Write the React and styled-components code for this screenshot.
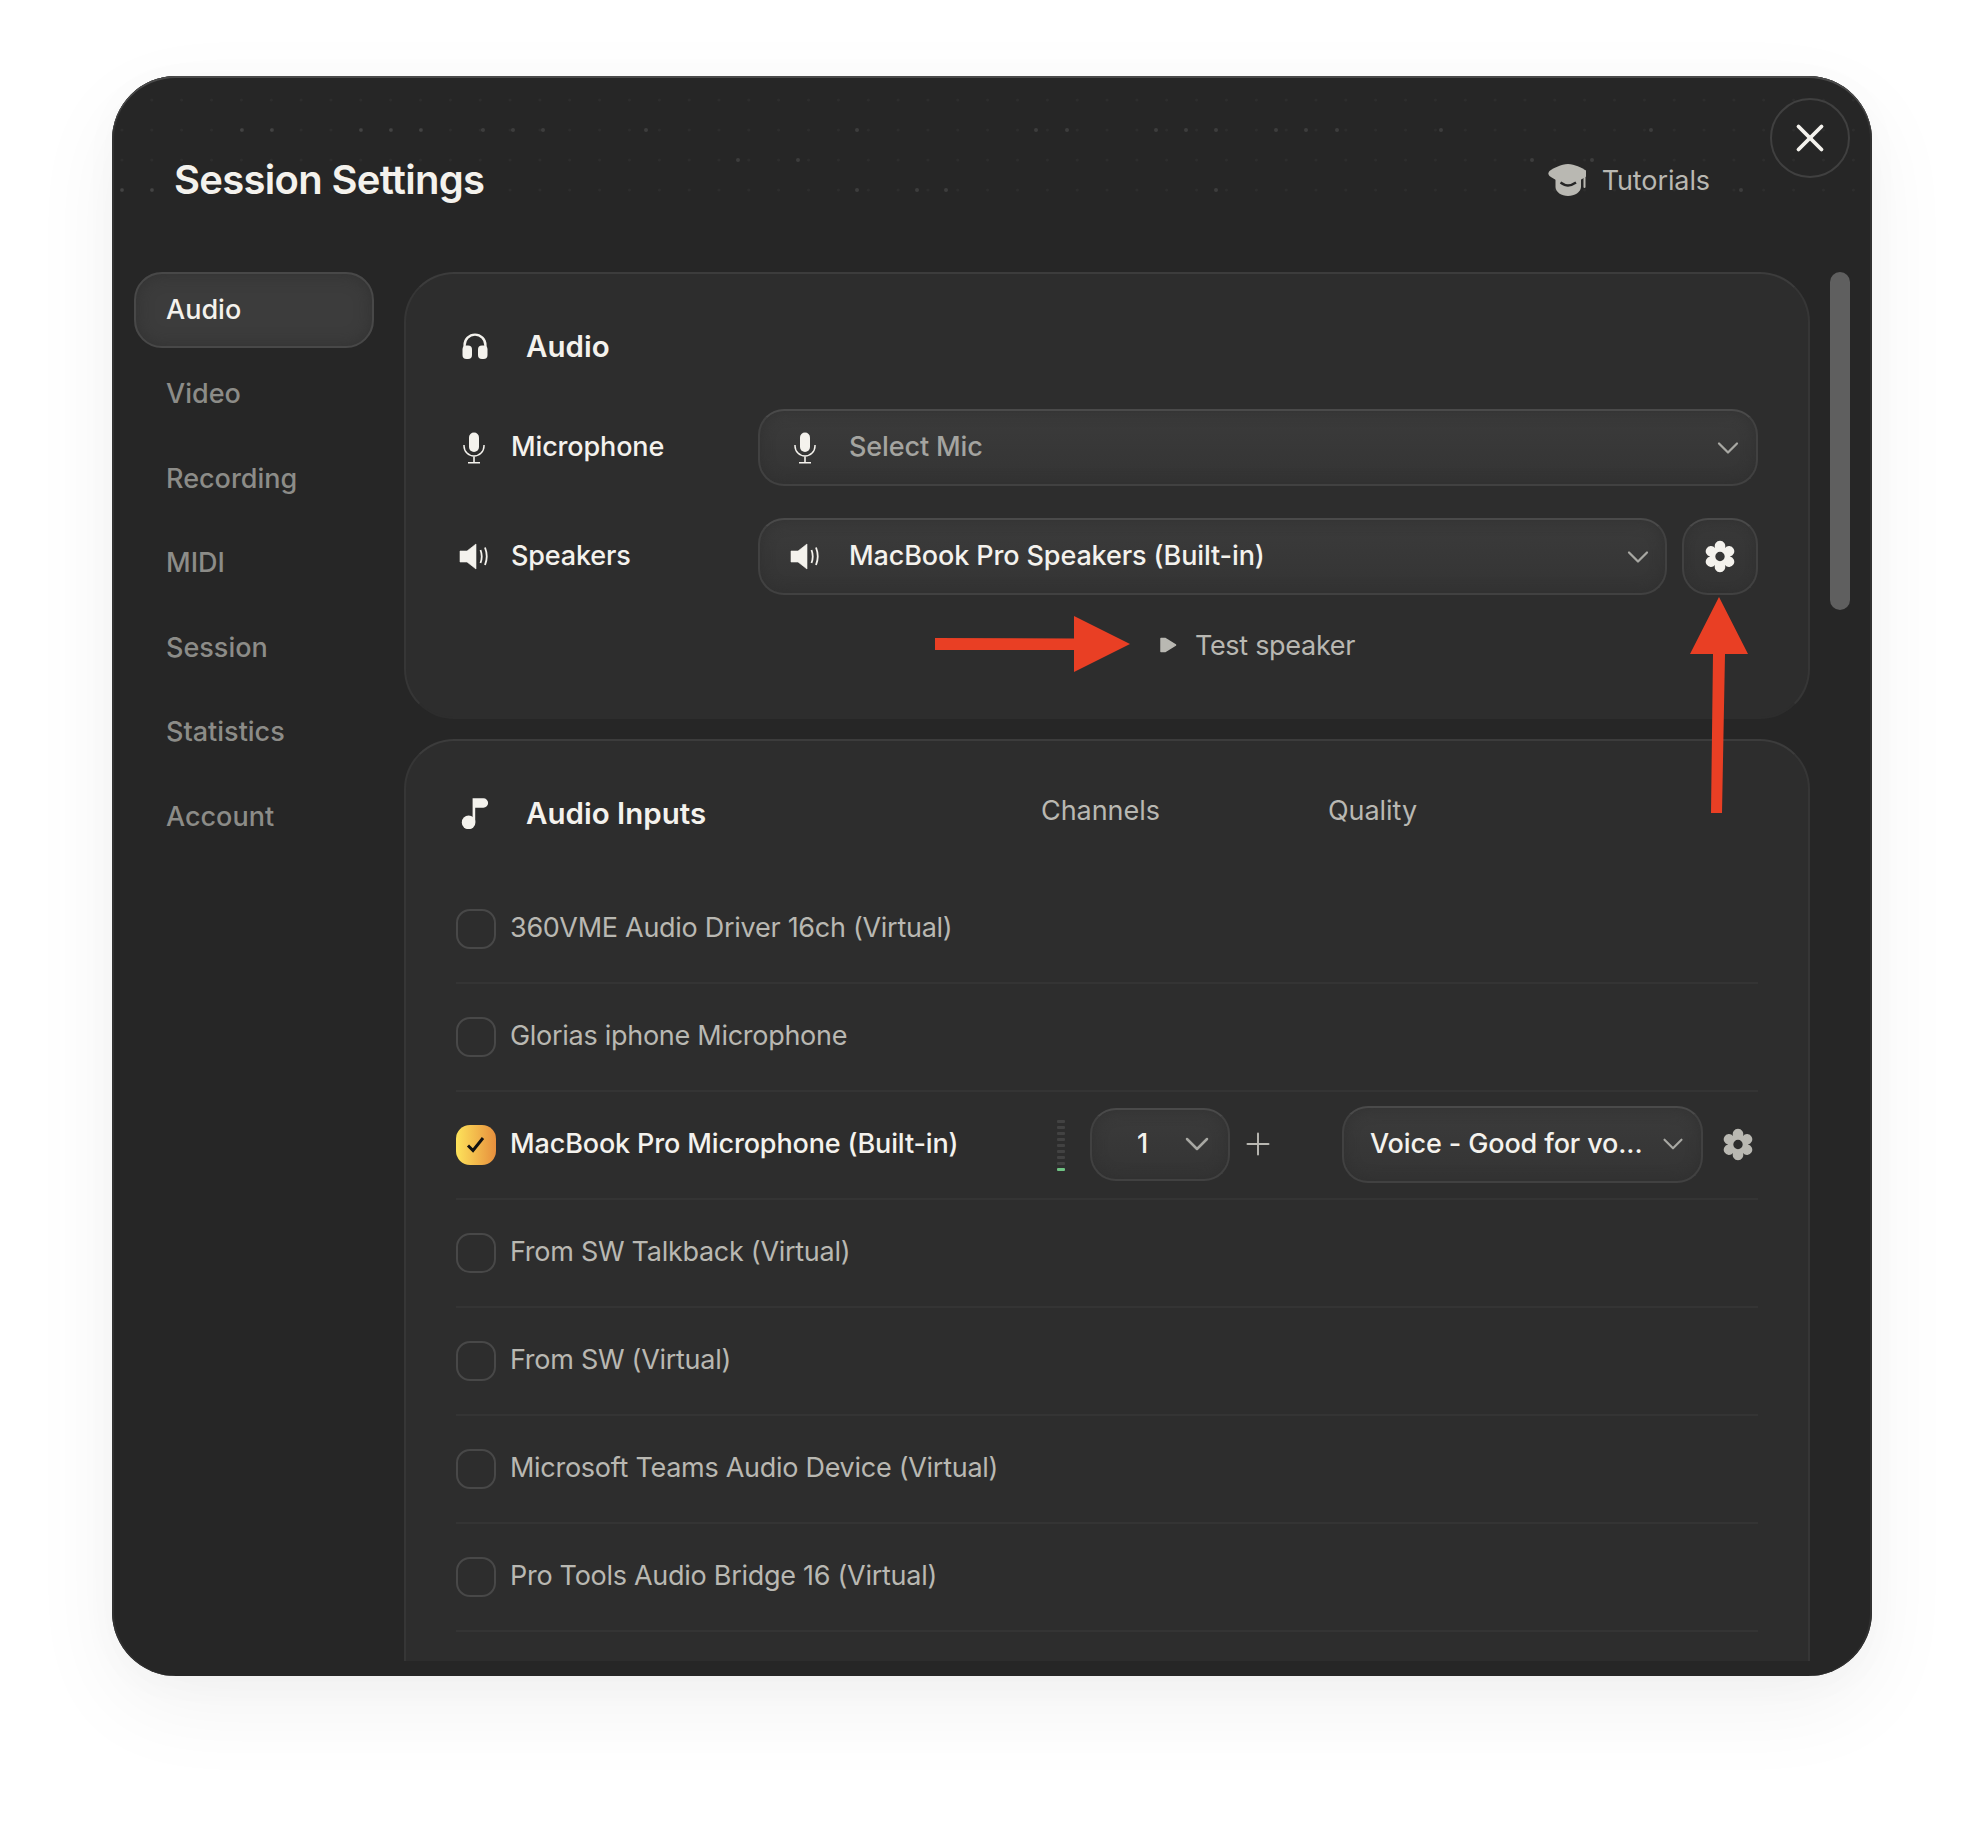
import React from 'react';
import styled, { createGlobalStyle } from 'styled-components';
import { ChevronDown, Plus, X } from 'lucide-react';

const GlobalStyle = createGlobalStyle`
  html, body { margin: 0; padding: 0; background: #fff; }
  body { font-family: Inter, "Noto Sans", "Liberation Sans", sans-serif; -webkit-font-smoothing: antialiased; }
`;

const Page = styled.div`
  width: 1984px;
  height: 1824px;
  padding: 76px 112px 0;
  box-sizing: border-box;
  position: relative;
  overflow: hidden;
  background: #fff;
`;

const Modal = styled.div`
  position: relative;
  width: 1760px;
  height: 1600px;
  box-sizing: border-box;
  border-radius: 64px;
  background: #262626;
  box-shadow: inset 0 2px 0 #4a4a4a, inset 2px 0 0 #313131, inset -2px 0 0 #313131, 0 30px 90px rgba(0, 0, 0, 0.055), 0 6px 40px rgba(0, 0, 0, 0.025);
  padding-bottom: 15px;
  display: flex;
  flex-direction: column;
`;

const DotField = styled.svg`
  position: absolute;
  left: 0;
  top: 0;
  pointer-events: none;
`;

const Header = styled.header`
  position: relative;
  height: 196px;
  box-sizing: border-box;
  padding: 63px 162px 53px 62px;
  display: flex;
  align-items: center;
  justify-content: space-between;
  flex: none;
`;

const Title = styled.h1`
  margin: 0;
  font-size: 40px;
  font-weight: 600;
  letter-spacing: -0.7px;
  color: #f4f2ed;
`;

const Tutorials = styled.a`
  display: flex;
  align-items: center;
  gap: 16px;
  font-size: 27px;
  font-weight: 400;
  letter-spacing: -0.1px;
  color: #b9b8b2;
  margin-top: 2px;
`;

const CloseButton = styled.button`
  position: absolute;
  right: 22px;
  top: 22px;
  width: 80px;
  height: 80px;
  padding: 0;
  border-radius: 50%;
  border: 2px solid #404040;
  background: transparent;
  color: #f4f2ed;
  display: flex;
  align-items: center;
  justify-content: center;
`;

const Body = styled.div`
  flex: 1;
  min-height: 0;
  display: flex;
  padding-left: 22px;
  gap: 30px;
`;

const Sidebar = styled.nav`
  width: 240px;
  flex: none;
  display: flex;
  flex-direction: column;
  gap: 8.5px;
`;

const NavItem = styled.div`
  height: 76px;
  box-sizing: border-box;
  padding-left: 32px;
  padding-bottom: 2px;
  display: flex;
  align-items: center;
  border-radius: 28px;
  font-size: 27px;
  font-weight: 500;
  color: ${p => (p.$active ? '#f4f2ed' : '#8c8c88')};
  ${p => p.$active && `
    background: #3c3c3c;
    border: 2px solid #484848;
    padding-left: 30px;
    box-shadow: inset 0 0 16px rgba(46, 46, 46, 0.7);
  `}
`;

const Content = styled.main`
  width: 1406px;
  flex: none;
  overflow: hidden;
  display: flex;
  flex-direction: column;
  gap: 20px;
`;

const Card = styled.section`
  flex: none;
  box-sizing: border-box;
  background: #2d2d2d;
  border: 2px solid #363636;
  border-top-color: #3c3c3c;
  border-bottom-color: #2d2d2d;
  border-radius: 50px;
  padding: 38px 50px ${p => (p.$clipped ? 120 : 52)}px;
`;

const CardHeader = styled.div`
  height: 68px;
  display: flex;
  align-items: center;
`;

const HeaderIcon = styled.span`
  width: 70px;
  padding-left: 5px;
  box-sizing: border-box;
  flex: none;
  display: flex;
  align-items: center;
`;

const CardTitle = styled.h2`
  margin: 0;
  font-size: 29.5px;
  font-weight: 600;
  color: #f4f2ed;
  width: ${p => p.$width || 'auto'};
  flex: none;
`;

const ColumnLabel = styled.span`
  width: ${p => p.$width};
  flex: none;
  font-size: 27px;
  font-weight: 400;
  letter-spacing: -0.05px;
  color: #b9b8b2;
  padding-bottom: 6px;
`;

const Fields = styled.div`
  margin-top: 29px;
  display: flex;
  flex-direction: column;
  gap: 32px;
`;

const FieldRow = styled.div`
  display: flex;
  align-items: center;
`;

const FieldLabel = styled.div`
  width: 302px;
  flex: none;
  display: flex;
  align-items: center;
  padding-bottom: 2px;
  font-size: 27px;
  font-weight: 500;
  letter-spacing: -0.15px;
  color: #f4f2ed;
`;

const LabelIcon = styled.span`
  width: 55px;
  flex: none;
  display: flex;
  align-items: center;
  padding-left: ${p => p.$pad || 0}px;
  padding-top: 2px;
  box-sizing: border-box;
`;

const Select = styled.div`
  height: ${p => p.$height || 77}px;
  width: ${p => p.$width || 'auto'};
  flex: ${p => (p.$width ? 'none' : 1)};
  box-sizing: border-box;
  display: flex;
  align-items: center;
  border-radius: 26px;
  background: linear-gradient(180deg, #3b3b3b, #343434);
  border: 2px solid #414141;
  border-top-color: #4a4a4a;
  box-shadow: inset 0 0 14px rgba(46, 46, 46, 0.75);
  color: #f4f2ed;
  font-size: 27px;
  font-weight: 500;
  letter-spacing: -0.12px;
`;

const ChannelSelect = styled(Select)`
  margin-left: 25px;
`;

const QualitySelect = styled(Select)`
  margin-left: 66px;
`;

const SelectIcon = styled.span`
  width: ${p => p.$width}px;
  flex: none;
  box-sizing: border-box;
  padding-left: ${p => p.$pad}px;
  display: flex;
  align-items: center;
`;

const SelectText = styled.span`
  flex: 1;
  min-width: 0;
  white-space: nowrap;
  padding-left: ${p => p.$pad || 0}px;
  padding-bottom: 2px;
  color: ${p => (p.$muted ? '#a4a4a0' : '#f4f2ed')};
`;

const Chevron = styled(ChevronDown)`
  flex: none;
  color: #a8a8a3;
  margin-right: ${p => p.$right}px;
`;

const GearButton = styled.button`
  width: 76px;
  height: 77px;
  flex: none;
  margin-left: 15px;
  padding: 0;
  border-radius: 26px;
  background: linear-gradient(180deg, #383838, #333);
  border: 2px solid #414141;
  border-top-color: #4a4a4a;
  display: flex;
  align-items: center;
  justify-content: center;
  box-shadow: inset 0 0 10px rgba(46, 46, 46, 0.75);
`;

const TestRow = styled.div`
  margin-top: 30px;
  height: 40px;
  padding-left: 300px;
  display: flex;
  align-items: center;
  justify-content: center;
  gap: 18px;
  font-size: 27px;
  letter-spacing: -0.3px;
  color: #b9b8b2;
`;

const InputList = styled.div`
  margin-top: 29px;
`;

const InputRow = styled.div`
  height: 108px;
  box-sizing: border-box;
  padding-bottom: 2px;
  border-bottom: 2px solid #343434;
  display: flex;
  align-items: center;
`;

const InputName = styled.div`
  width: 601px;
  flex: none;
  display: flex;
  align-items: center;
  gap: 14px;
  margin-bottom: 2px;
  font-size: 27px;
  font-weight: ${p => (p.$selected ? 500 : 400)};
  letter-spacing: ${p => (p.$selected ? -0.14 : -0.28)}px;
  color: ${p => (p.$selected ? '#f4f2ed' : '#b9b8b2')};
`;

const Checkbox = styled.span`
  width: 40px;
  height: 40px;
  flex: none;
  box-sizing: border-box;
  border-radius: 14px;
  margin-top: 4px;
  display: flex;
  align-items: center;
  justify-content: center;
  border: ${p => (p.$checked ? 'none' : '2px solid #484848')};
  background: ${p => (p.$checked ? 'linear-gradient(90deg, #fde35b, #e78f3d)' : 'transparent')};
`;

const Meter = styled.div`
  width: 8px;
  flex: none;
  display: flex;
  flex-direction: column;
  gap: 3px;
  margin-top: 2px;
`;

const MeterStep = styled.span`
  height: 3px;
  border-radius: 1px;
  background: ${p => (p.$lit ? '#6fc283' : '#424242')};
`;

const PlusMark = styled(Plus)`
  flex: none;
  margin-left: 10px;
  color: #b9b8b2;
`;

const CenterValue = styled.span`
  width: 85px;
  flex: none;
  text-align: center;
  font-size: 27px;
  font-weight: 500;
  padding-left: 16px;
  padding-bottom: 2px;
  box-sizing: border-box;
`;

const RowGear = styled.span`
  margin-left: 19px;
  display: flex;
  flex: none;
`;

const ScrollThumb = styled.div`
  position: absolute;
  left: 1718px;
  top: 196px;
  width: 20px;
  height: 338px;
  border-radius: 10px;
  background: #5f5f5f;
`;

const ArrowRight = styled.svg`
  position: absolute;
  left: 935px;
  top: 614px;
`;

const ArrowUp = styled.svg`
  position: absolute;
  left: 1688px;
  top: 597px;
`;

const Headphones = () => (
  <svg width="28" height="28" viewBox="0 0 28 28" fill="none">
    <path d="M3.6 17V13a10.4 10.4 0 0 1 20.8 0v4" stroke="#f4f2ed" strokeWidth="2.4" />
    <rect x="1.5" y="13.5" width="9.5" height="13.5" rx="4" fill="#f4f2ed" />
    <rect x="17" y="13.5" width="9.5" height="13.5" rx="4" fill="#f4f2ed" />
  </svg>
);

const Mic = ({ color = '#f4f2ed' }) => (
  <svg width="22" height="32" viewBox="0 0 22 32" fill="none">
    <rect x="6" y="0.5" width="10" height="19.5" rx="5" fill={color} />
    <path d="M1 13v1a10 10 0 0 0 20 0v-1" stroke={color} strokeWidth="1.5" />
    <path d="M11 24.5v6M5 30.7h12" stroke={color} strokeWidth="1.6" />
  </svg>
);

const Speaker = ({ color = '#f4f2ed' }) => (
  <svg width="30" height="27" viewBox="9 12 30 27" fill="none">
    <path d="M10 20h7l9-7v25l-9-7h-7z" fill={color} stroke={color} strokeWidth="0.6" strokeLinejoin="round" />
    <path d="M30.5 19Q33 25.5 30.5 32M35 16.5Q38.5 25.5 35 34" stroke={color} strokeWidth="1.8" />
  </svg>
);

const Note = () => (
  <svg width="28" height="32" viewBox="22 16 28 32">
    <circle cx="29.6" cy="41.4" r="6.8" fill="#f4f2ed" />
    <path d="M33.6 17.3H44.4a4.7 4.7 0 0 1 0 9.4H36.2V41h-2.6z" fill="#f4f2ed" />
  </svg>
);

const Cap = () => (
  <svg width="38" height="34" viewBox="8 9 38 34" fill="none">
    <path d="M15.500 22v11c0 5 6 9 12.500 9s13-4 13-9V22z" fill="#b9b8b2" />
    <path d="M28 10c-7 .5-14 3.500-18.500 7-1.500 1.500-1.500 3.500 0 5 4.500 3.500 12 7 18.500 7.500 6.500-.5 14-4 18.500-7.500 1.500-1.500 1.500-3.500 0-5C42 13.500 35 10.500 28 10z" fill="#b9b8b2" />
    <path d="M20.500 28.500c3 2 5.500 3 7.500 3s5-1 8-3" stroke="#262626" strokeWidth="2.400" />
    <path d="M44.500 21v12" stroke="#b9b8b2" strokeWidth="2" strokeLinecap="round" />
  </svg>
);

const Gear = ({ color }) => (
  <svg width="32" height="33" viewBox="-17 -17 34 34">
    <path
      fillRule="evenodd"
      fill={color}
      d="M-5.250-9.090A5.600 5.600 0 1 1 5.250-9.090A5.600 5.600 0 1 1 10.500 0A5.600 5.600 0 1 1 5.250 9.090A5.600 5.600 0 1 1 -5.250 9.090A5.600 5.600 0 1 1 -10.500 0A5.600 5.600 0 1 1 -5.250-9.090ZM5 0A5 5 0 1 0 -5 0A5 5 0 1 0 5 0Z"
    />
  </svg>
);

const Play = () => (
  <svg width="18" height="18" viewBox="0 0 18 18">
    <path d="M2 2.500h4L16.500 9 6 15.500H2z" fill="#b9b8b2" stroke="#b9b8b2" strokeWidth="1.500" strokeLinejoin="round" />
  </svg>
);

const CheckMark = () => (
  <svg width="20" height="18" viewBox="0 0 20 18" fill="none">
    <path d="M2 9.500l5 5L17 2" stroke="#111" strokeWidth="3" />
  </svg>
);

// header dots: faint grid with a few brighter ones
const brightDots = {
  100: [],
  130: [242, 272, 361, 391, 421, 483, 513, 543, 646, 857, 1036, 1067, 1156, 1186, 1216, 1276, 1306, 1337, 1441, 1651],
  160: [738, 798, 1532, 1592],
  190: [122, 152, 857, 917, 946, 1216, 1741],
};

const Dots = () => {
  const dots = [];
  Object.keys(brightDots).forEach(row => {
    for (let x = 122; x < 1860; x += 29.85) {
      dots.push(<circle key={row + '-' + x} cx={x - 112} cy={row - 76} r="1.6" fill="#fff" opacity="0.035" />);
    }
    brightDots[row].forEach(x => {
      dots.push(<circle key={row + 'b' + x} cx={x - 112} cy={row - 76} r="2" fill="#fff" opacity="0.11" />);
    });
  });
  return (
    <DotField width="1760" height="140" viewBox="0 0 1760 140">
      {dots}
    </DotField>
  );
};

const navItems = ['Audio', 'Video', 'Recording', 'MIDI', 'Session', 'Statistics', 'Account'];

const inputs = [
  '360VME Audio Driver 16ch (Virtual)',
  'Glorias iphone Microphone',
  'MacBook Pro Microphone (Built-in)',
  'From SW Talkback (Virtual)',
  'From SW (Virtual)',
  'Microsoft Teams Audio Device (Virtual)',
  'Pro Tools Audio Bridge 16 (Virtual)',
];

const SelectedControls = () => (
  <>
    <Meter>
      {[0, 1, 2, 3, 4, 5, 6, 7, 8].map(i => (
        <MeterStep key={i} $lit={i === 8} />
      ))}
    </Meter>
    <ChannelSelect $width="140px" $height={73}>
      <CenterValue>1</CenterValue>
      <Chevron size={40} strokeWidth={1.5} $right={5} />
    </ChannelSelect>
    <PlusMark size={36} strokeWidth={1.3} />
    <QualitySelect $width="361px">
      <SelectText $pad={26}>Voice - Good for vo...</SelectText>
      <Chevron size={34} strokeWidth={1.5} $right={11} />
    </QualitySelect>
    <RowGear>
      <Gear color="#b9b8b2" />
    </RowGear>
  </>
);

export default function App() {
  return (
    <Page>
      <GlobalStyle />
      <Modal>
        <Dots />
        <Header>
          <Title>Session Settings</Title>
          <Tutorials>
            <Cap />
            Tutorials
          </Tutorials>
          <CloseButton>
            <X size={46} strokeWidth={2} />
          </CloseButton>
        </Header>
        <Body>
          <Sidebar>
            {navItems.map((item, i) => (
              <NavItem key={item} $active={i === 0}>{item}</NavItem>
            ))}
          </Sidebar>
          <Content>
            <Card>
              <CardHeader>
                <HeaderIcon><Headphones /></HeaderIcon>
                <CardTitle>Audio</CardTitle>
              </CardHeader>
              <Fields>
                <FieldRow>
                  <FieldLabel>
                    <LabelIcon $pad={7}><Mic /></LabelIcon>
                    Microphone
                  </FieldLabel>
                  <Select>
                    <SelectIcon $width={89} $pad={34}><Mic color="#f4f2ed" /></SelectIcon>
                    <SelectText $muted>Select Mic</SelectText>
                    <Chevron size={36} strokeWidth={1.5} $right={10} />
                  </Select>
                </FieldRow>
                <FieldRow>
                  <FieldLabel>
                    <LabelIcon $pad={3}><Speaker /></LabelIcon>
                    Speakers
                  </FieldLabel>
                  <Select>
                    <SelectIcon $width={89} $pad={30}><Speaker /></SelectIcon>
                    <SelectText>MacBook Pro Speakers (Built-in)</SelectText>
                    <Chevron size={36} strokeWidth={1.5} $right={9} />
                  </Select>
                  <GearButton><Gear color="#f4f2ed" /></GearButton>
                </FieldRow>
              </Fields>
              <TestRow>
                <Play />
                Test speaker
              </TestRow>
            </Card>
            <Card $clipped>
              <CardHeader>
                <HeaderIcon><Note /></HeaderIcon>
                <CardTitle $width="515px">Audio Inputs</CardTitle>
                <ColumnLabel $width="287px">Channels</ColumnLabel>
                <ColumnLabel $width="120px">Quality</ColumnLabel>
              </CardHeader>
              <InputList>
                {inputs.map((name, i) => (
                  <InputRow key={name}>
                    <InputName $selected={i === 2}>
                      <Checkbox $checked={i === 2}>{i === 2 && <CheckMark />}</Checkbox>
                      {name}
                    </InputName>
                    {i === 2 && <SelectedControls />}
                  </InputRow>
                ))}
              </InputList>
            </Card>
          </Content>
        </Body>
        <ScrollThumb />
      </Modal>
      <ArrowRight width="196" height="60" viewBox="0 0 196 60">
        <polygon points="0,24 139,24.500 139,2 195,30 139,58 139,36 0,36" fill="#e93f24" />
      </ArrowRight>
      <ArrowUp width="62" height="218" viewBox="0 0 62 218">
        <polygon points="31,0 60,57 37,57 34,216 23,216 25,57 2,57" fill="#e93f24" />
      </ArrowUp>
    </Page>
  );
}
